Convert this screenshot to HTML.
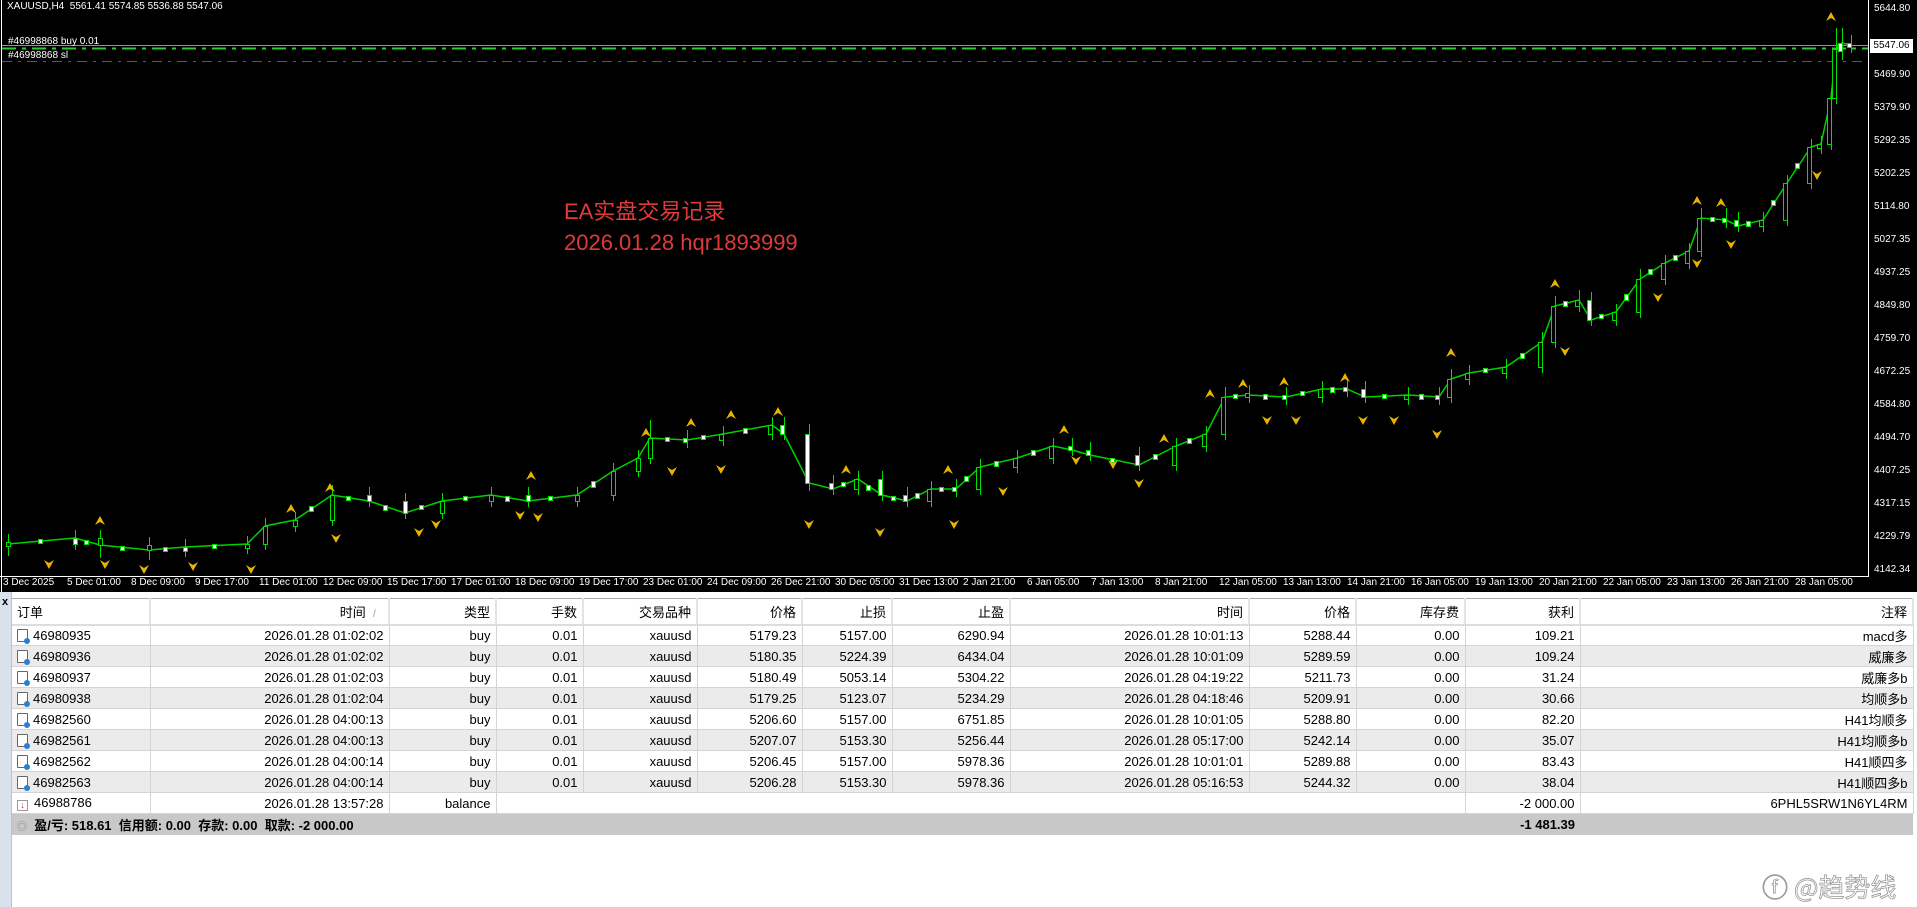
<!DOCTYPE html>
<html><head><meta charset="utf-8">
<style>
*{margin:0;padding:0;box-sizing:border-box}
body{width:1917px;height:907px;overflow:hidden;background:#fff;font-family:"Liberation Sans","Noto Sans CJK SC",sans-serif;position:relative}
#chart{position:absolute;left:0;top:0;width:1917px;height:592px;background:#000;overflow:hidden}
#chart .t{position:absolute;color:#fff;font-size:10px;white-space:nowrap;line-height:12px}
#strip{position:absolute;left:0;top:592px;width:12px;height:315px;background:#d9e2ec;border-right:1px solid #b8c4d0}
#strip span{position:absolute;top:4px;left:2px;font-size:11px;font-weight:bold}
table{position:absolute;left:12px;top:598px;border-collapse:collapse;font-size:13px;table-layout:fixed;color:#000}
td{height:21px;padding:0 5px;text-align:right;white-space:nowrap;overflow:hidden;border-right:1px solid #d4d4d4;border-bottom:1px solid #d4d4d4}
tr.h td{height:26px;background:#fff;border-right:2px solid #e4e4e4;border-top:1px solid #aaa;border-bottom:2px solid #ddd}
tr.g td{background:#ebebeb}
td.l{text-align:left}
tr.s td{background:#c8c8c8;font-weight:bold;border:none}
.ic{display:inline-block;width:11px;height:13px;border:1px solid #666;border-radius:1px;background:#fff;vertical-align:-2px;margin-right:5px;position:relative}
.ic:after{content:"";position:absolute;right:-3px;bottom:-3px;width:6px;height:6px;border-radius:50%;background:#2a7fd4}
.ib{display:inline-block;width:11px;height:11px;border:1px solid #999;background:#fff;vertical-align:-1px;margin-right:6px;color:#d22;font-size:9px;line-height:9px;text-align:center;font-weight:bold;font-style:normal}
</style></head><body>
<div id="chart">
<svg width="1917" height="592" style="position:absolute;left:0;top:0">
<line x1="1.5" y1="0" x2="1.5" y2="592" stroke="#fff"/>
<line x1="1868.5" y1="0" x2="1868.5" y2="576" stroke="#fff"/>
<line x1="0" y1="576.5" x2="1869" y2="576.5" stroke="#fff"/>
<line x1="2" x2="1868" y1="45.5" y2="45.5" stroke="#8a96a4"/>
<line x1="2" x2="1868" y1="48.5" y2="48.5" stroke="#32c832" stroke-width="2" stroke-dasharray="14,6,4,6"/>
<line x1="2" x2="1868" y1="61.5" y2="61.5" stroke="#e02020" stroke-dasharray="10,6,3,6"/>
<polyline fill="none" stroke="#00d000" stroke-width="1.5" points="8,544 75,538 100,545 149,550 185,547 247,544 265,526 295,520 332,495 369,501 405,513 442,501 491,495 528,501 577,495 613,471 638,458 650,438 687,440 723,434 772,425 784,434 809,483 833,489 858,479 882,495 907,501 931,489 956,489 980,467 1017,458 1053,446 1072,450 1090,455 1139,465 1176,446 1206,434 1225,397 1249,395 1286,397 1322,389 1347,389 1365,397 1408,395 1439,397 1451,379 1469,373 1506,367 1542,342 1555,306 1579,300 1591,320 1616,312 1640,279 1665,263 1689,251 1701,218 1726,220 1738,226 1763,220 1787,183 1811,147 1821,144 1831,98 1836,49 1842,43 1851,45"/>
<g stroke="#00e000" fill="#000">
<path fill="none" d="M8.5 534V556M75.5 530V550M100.5 530V558M149.5 537V560M185.5 539V557M247.5 536V554M265.5 518V550M295.5 512V532M332.5 485V526M369.5 487V507M405.5 493V519M442.5 493V519M491.5 487V507M528.5 487V507M577.5 487V507M613.5 463V501M638.5 450V477M650.5 420V464M687.5 430V448M723.5 426V446M772.5 417V440M784.5 417V440M809.5 424V491M833.5 475V495M858.5 471V495M882.5 471V501M907.5 487V507M931.5 481V507M956.5 479V497M980.5 459V495M1017.5 450V473M1053.5 438V464M1072.5 438V456M1090.5 442V461M1139.5 447V471M1176.5 438V471M1206.5 426V452M1225.5 387V440M1249.5 385V403M1286.5 387V405M1322.5 381V403M1347.5 379V397M1365.5 381V403M1408.5 387V405M1439.5 387V405M1451.5 369V403M1469.5 365V385M1506.5 359V379M1542.5 332V373M1555.5 296V348M1579.5 290V312M1591.5 292V326M1616.5 304V326M1640.5 269V318M1665.5 255V285M1689.5 243V269M1701.5 208V257M1726.5 208V228M1738.5 212V232M1763.5 212V232M1787.5 175V226M1811.5 139V189M1821.5 136V154M1831.5 90V150M1836.5 28V104M1842.5 28V60M1851.5 35V53"/>
<rect x="6.5" y="542.5" width="4" height="4"/><rect x="73.5" y="538.5" width="4" height="6" fill="#fff"/><rect x="98.5" y="538.5" width="4" height="7"/><rect x="147.5" y="545.5" width="4" height="5"/><rect x="183.5" y="547.5" width="4" height="4" fill="#fff"/><rect x="245.5" y="544.5" width="4" height="4"/><rect x="263.5" y="526.5" width="4" height="18"/><rect x="293.5" y="520.5" width="4" height="6"/><rect x="330.5" y="495.5" width="4" height="25"/><rect x="367.5" y="495.5" width="4" height="6" fill="#fff"/><rect x="403.5" y="501.5" width="4" height="12" fill="#fff"/><rect x="440.5" y="501.5" width="4" height="12"/><rect x="489.5" y="495.5" width="4" height="6"/><rect x="526.5" y="495.5" width="4" height="6" fill="#fff"/><rect x="575.5" y="495.5" width="4" height="6"/><rect x="611.5" y="471.5" width="4" height="24"/><rect x="636.5" y="458.5" width="4" height="13"/><rect x="648.5" y="438.5" width="4" height="20"/><rect x="683.5" y="438.5" width="4" height="4" fill="#fff"/><rect x="719.5" y="434.5" width="4" height="6"/><rect x="768.5" y="425.5" width="4" height="9"/><rect x="780.5" y="425.5" width="4" height="9" fill="#fff"/><rect x="805.5" y="434.5" width="4" height="49" fill="#fff"/><rect x="829.5" y="483.5" width="4" height="6" fill="#fff"/><rect x="854.5" y="479.5" width="4" height="10"/><rect x="878.5" y="479.5" width="4" height="16" fill="#fff"/><rect x="903.5" y="495.5" width="4" height="6" fill="#fff"/><rect x="927.5" y="489.5" width="4" height="12"/><rect x="952.5" y="487.5" width="4" height="4" fill="#fff"/><rect x="976.5" y="467.5" width="4" height="22"/><rect x="1013.5" y="458.5" width="4" height="9"/><rect x="1049.5" y="446.5" width="4" height="12"/><rect x="1068.5" y="446.5" width="4" height="4" fill="#fff"/><rect x="1086.5" y="450.5" width="4" height="5" fill="#fff"/><rect x="1135.5" y="455.5" width="4" height="10" fill="#fff"/><rect x="1172.5" y="446.5" width="4" height="19"/><rect x="1202.5" y="434.5" width="4" height="12"/><rect x="1221.5" y="397.5" width="4" height="37"/><rect x="1245.5" y="393.5" width="4" height="4"/><rect x="1282.5" y="395.5" width="4" height="4" fill="#fff"/><rect x="1318.5" y="389.5" width="4" height="8"/><rect x="1343.5" y="387.5" width="4" height="4" fill="#fff"/><rect x="1361.5" y="389.5" width="4" height="8" fill="#fff"/><rect x="1404.5" y="395.5" width="4" height="4"/><rect x="1435.5" y="395.5" width="4" height="4" fill="#fff"/><rect x="1447.5" y="379.5" width="4" height="18"/><rect x="1465.5" y="373.5" width="4" height="6"/><rect x="1502.5" y="367.5" width="4" height="6"/><rect x="1538.5" y="342.5" width="4" height="25"/><rect x="1551.5" y="306.5" width="4" height="36"/><rect x="1575.5" y="300.5" width="4" height="6"/><rect x="1587.5" y="300.5" width="4" height="20" fill="#fff"/><rect x="1612.5" y="312.5" width="4" height="8"/><rect x="1636.5" y="279.5" width="4" height="33"/><rect x="1661.5" y="263.5" width="4" height="16"/><rect x="1685.5" y="251.5" width="4" height="12"/><rect x="1697.5" y="218.5" width="4" height="33"/><rect x="1722.5" y="218.5" width="4" height="4" fill="#fff"/><rect x="1734.5" y="220.5" width="4" height="6" fill="#fff"/><rect x="1759.5" y="220.5" width="4" height="6"/><rect x="1783.5" y="183.5" width="4" height="37"/><rect x="1807.5" y="147.5" width="4" height="36"/><rect x="1817.5" y="144.5" width="4" height="4"/><rect x="1827.5" y="98.5" width="4" height="46"/><rect x="1832.5" y="49.5" width="4" height="49"/><rect x="1838.5" y="43.5" width="4" height="8" fill="#fff"/><rect x="1847.5" y="43.5" width="4" height="4" fill="#fff"/>
<g fill="#fff">
<rect x="38.5" y="539.5" width="4" height="4"/><rect x="84.5" y="540.5" width="4" height="4"/><rect x="120.5" y="546.5" width="4" height="4"/><rect x="163.5" y="547.5" width="4" height="4"/><rect x="212.5" y="544.5" width="4" height="4"/><rect x="309.5" y="506.5" width="4" height="5"/><rect x="346.5" y="496.5" width="4" height="4"/><rect x="383.5" y="505.5" width="4" height="5"/><rect x="419.5" y="505.5" width="4" height="4"/><rect x="463.5" y="496.5" width="4" height="4"/><rect x="505.5" y="496.5" width="4" height="5"/><rect x="548.5" y="496.5" width="4" height="4"/><rect x="591.5" y="481.5" width="4" height="6"/><rect x="665.5" y="437.5" width="4" height="4"/><rect x="701.5" y="435.5" width="4" height="4"/><rect x="743.5" y="428.5" width="4" height="5"/><rect x="841.5" y="482.5" width="4" height="4"/><rect x="866.5" y="485.5" width="4" height="5"/><rect x="891.5" y="496.5" width="4" height="4"/><rect x="915.5" y="493.5" width="4" height="5"/><rect x="939.5" y="487.5" width="4" height="4"/><rect x="964.5" y="476.5" width="4" height="5"/><rect x="994.5" y="461.5" width="4" height="5"/><rect x="1031.5" y="450.5" width="4" height="5"/><rect x="1110.5" y="458.5" width="4" height="4"/><rect x="1153.5" y="454.5" width="4" height="5"/><rect x="1187.5" y="438.5" width="4" height="5"/><rect x="1233.5" y="394.5" width="4" height="4"/><rect x="1263.5" y="394.5" width="4" height="5"/><rect x="1300.5" y="391.5" width="4" height="4"/><rect x="1330.5" y="387.5" width="4" height="5"/><rect x="1382.5" y="394.5" width="4" height="4"/><rect x="1419.5" y="394.5" width="4" height="5"/><rect x="1483.5" y="368.5" width="4" height="4"/><rect x="1520.5" y="353.5" width="4" height="5"/><rect x="1563.5" y="301.5" width="4" height="5"/><rect x="1599.5" y="314.5" width="4" height="4"/><rect x="1624.5" y="294.5" width="4" height="6"/><rect x="1648.5" y="269.5" width="4" height="5"/><rect x="1673.5" y="255.5" width="4" height="5"/><rect x="1710.5" y="217.5" width="4" height="4"/><rect x="1746.5" y="221.5" width="4" height="5"/><rect x="1771.5" y="200.5" width="4" height="5"/><rect x="1795.5" y="163.5" width="4" height="5"/>
</g></g>
<g fill="#e8b400">
<polygon points="95,525 100,516 105,525 100,522"/><polygon points="286,513 291,504 296,513 291,510"/><polygon points="325,492 330,483 335,492 330,489"/><polygon points="526,480 531,471 536,480 531,477"/><polygon points="641,437 646,428 651,437 646,434"/><polygon points="686,427 691,418 696,427 691,424"/><polygon points="726,419 731,410 736,419 731,416"/><polygon points="773,416 778,407 783,416 778,413"/><polygon points="841,474 846,465 851,474 846,471"/><polygon points="943,474 948,465 953,474 948,471"/><polygon points="1059,434 1064,425 1069,434 1064,431"/><polygon points="1159,443 1164,434 1169,443 1164,440"/><polygon points="1205,398 1210,389 1215,398 1210,395"/><polygon points="1238,388 1243,379 1248,388 1243,385"/><polygon points="1279,386 1284,377 1289,386 1284,383"/><polygon points="1340,382 1345,373 1350,382 1345,379"/><polygon points="1446,357 1451,348 1456,357 1451,354"/><polygon points="1550,288 1555,279 1560,288 1555,285"/><polygon points="1692,205 1697,196 1702,205 1697,202"/><polygon points="1716,207 1721,198 1726,207 1721,204"/><polygon points="1826,21 1831,12 1836,21 1831,18"/>
<polygon points="44,560 49,569 54,560 49,563"/><polygon points="100,560 105,569 110,560 105,563"/><polygon points="139,565 144,574 149,565 144,568"/><polygon points="188,562 193,571 198,562 193,565"/><polygon points="246,565 251,574 256,565 251,568"/><polygon points="331,534 336,543 341,534 336,537"/><polygon points="414,528 419,537 424,528 419,531"/><polygon points="431,520 436,529 441,520 436,523"/><polygon points="515,511 520,520 525,511 520,514"/><polygon points="533,513 538,522 543,513 538,516"/><polygon points="667,467 672,476 677,467 672,470"/><polygon points="716,465 721,474 726,465 721,468"/><polygon points="804,520 809,529 814,520 809,523"/><polygon points="875,528 880,537 885,528 880,531"/><polygon points="949,520 954,529 959,520 954,523"/><polygon points="998,487 1003,496 1008,487 1003,490"/><polygon points="1071,456 1076,465 1081,456 1076,459"/><polygon points="1108,460 1113,469 1118,460 1113,463"/><polygon points="1134,479 1139,488 1144,479 1139,482"/><polygon points="1262,416 1267,425 1272,416 1267,419"/><polygon points="1291,416 1296,425 1301,416 1296,419"/><polygon points="1358,416 1363,425 1368,416 1363,419"/><polygon points="1389,416 1394,425 1399,416 1394,419"/><polygon points="1432,430 1437,439 1442,430 1437,433"/><polygon points="1560,347 1565,356 1570,347 1565,350"/><polygon points="1653,293 1658,302 1663,293 1658,296"/><polygon points="1692,259 1697,268 1702,259 1697,262"/><polygon points="1726,240 1731,249 1736,240 1731,243"/><polygon points="1812,171 1817,180 1822,171 1817,174"/>
</g>
</svg>
<div class="t" style="left:7px;top:1px">XAUUSD,H4&nbsp; 5561.41 5574.85 5536.88 5547.06</div>
<div class="t" style="left:8px;top:36px">#46998868 buy 0.01</div>
<div class="t" style="left:8px;top:50px">#46998868 sl</div>
<div style="position:absolute;left:564px;top:196px;color:#e03a3a;font-size:22px;line-height:31px">EA实盘交易记录<br>2026.01.28 hqr1893999</div>
<div class="t" style="left:1874px;top:3px">5644.80</div>
<div class="t" style="left:1874px;top:69px">5469.90</div>
<div class="t" style="left:1874px;top:102px">5379.90</div>
<div class="t" style="left:1874px;top:135px">5292.35</div>
<div class="t" style="left:1874px;top:168px">5202.25</div>
<div class="t" style="left:1874px;top:201px">5114.80</div>
<div class="t" style="left:1874px;top:234px">5027.35</div>
<div class="t" style="left:1874px;top:267px">4937.25</div>
<div class="t" style="left:1874px;top:300px">4849.80</div>
<div class="t" style="left:1874px;top:333px">4759.70</div>
<div class="t" style="left:1874px;top:366px">4672.25</div>
<div class="t" style="left:1874px;top:399px">4584.80</div>
<div class="t" style="left:1874px;top:432px">4494.70</div>
<div class="t" style="left:1874px;top:465px">4407.25</div>
<div class="t" style="left:1874px;top:498px">4317.15</div>
<div class="t" style="left:1874px;top:531px">4229.79</div>
<div class="t" style="left:1874px;top:564px">4142.34</div>
<div style="position:absolute;left:1870px;top:39px;width:43px;height:14px;background:#fff;color:#000;font-size:10px;line-height:14px;text-align:center">5547.06</div>
<div class="t" style="left:3px;top:577px">3 Dec 2025</div>
<div class="t" style="left:67px;top:577px">5 Dec 01:00</div>
<div class="t" style="left:131px;top:577px">8 Dec 09:00</div>
<div class="t" style="left:195px;top:577px">9 Dec 17:00</div>
<div class="t" style="left:259px;top:577px">11 Dec 01:00</div>
<div class="t" style="left:323px;top:577px">12 Dec 09:00</div>
<div class="t" style="left:387px;top:577px">15 Dec 17:00</div>
<div class="t" style="left:451px;top:577px">17 Dec 01:00</div>
<div class="t" style="left:515px;top:577px">18 Dec 09:00</div>
<div class="t" style="left:579px;top:577px">19 Dec 17:00</div>
<div class="t" style="left:643px;top:577px">23 Dec 01:00</div>
<div class="t" style="left:707px;top:577px">24 Dec 09:00</div>
<div class="t" style="left:771px;top:577px">26 Dec 21:00</div>
<div class="t" style="left:835px;top:577px">30 Dec 05:00</div>
<div class="t" style="left:899px;top:577px">31 Dec 13:00</div>
<div class="t" style="left:963px;top:577px">2 Jan 21:00</div>
<div class="t" style="left:1027px;top:577px">6 Jan 05:00</div>
<div class="t" style="left:1091px;top:577px">7 Jan 13:00</div>
<div class="t" style="left:1155px;top:577px">8 Jan 21:00</div>
<div class="t" style="left:1219px;top:577px">12 Jan 05:00</div>
<div class="t" style="left:1283px;top:577px">13 Jan 13:00</div>
<div class="t" style="left:1347px;top:577px">14 Jan 21:00</div>
<div class="t" style="left:1411px;top:577px">16 Jan 05:00</div>
<div class="t" style="left:1475px;top:577px">19 Jan 13:00</div>
<div class="t" style="left:1539px;top:577px">20 Jan 21:00</div>
<div class="t" style="left:1603px;top:577px">22 Jan 05:00</div>
<div class="t" style="left:1667px;top:577px">23 Jan 13:00</div>
<div class="t" style="left:1731px;top:577px">26 Jan 21:00</div>
<div class="t" style="left:1795px;top:577px">28 Jan 05:00</div>
</div>
<div id="strip"><span>x</span></div>
<table>
<colgroup><col style="width:138px"><col style="width:239px"><col style="width:107px"><col style="width:87px"><col style="width:114px"><col style="width:105px"><col style="width:90px"><col style="width:118px"><col style="width:239px"><col style="width:107px"><col style="width:109px"><col style="width:115px"><col style="width:333px"></colgroup>
<tr class="h"><td class="l">订单</td><td>时间 &nbsp;<span style="color:#999;font-size:10px">/</span>&nbsp;&nbsp;</td><td>类型</td><td>手数</td><td>交易品种</td><td>价格</td><td>止损</td><td>止盈</td><td>时间</td><td>价格</td><td>库存费</td><td>获利</td><td>注释</td></tr>
<tr><td class="l"><i class="ic"></i>46980935</td><td>2026.01.28 01:02:02</td><td>buy</td><td>0.01</td><td>xauusd</td><td>5179.23</td><td>5157.00</td><td>6290.94</td><td>2026.01.28 10:01:13</td><td>5288.44</td><td>0.00</td><td>109.21</td><td>macd多</td></tr>
<tr class="g"><td class="l"><i class="ic"></i>46980936</td><td>2026.01.28 01:02:02</td><td>buy</td><td>0.01</td><td>xauusd</td><td>5180.35</td><td>5224.39</td><td>6434.04</td><td>2026.01.28 10:01:09</td><td>5289.59</td><td>0.00</td><td>109.24</td><td>威廉多</td></tr>
<tr><td class="l"><i class="ic"></i>46980937</td><td>2026.01.28 01:02:03</td><td>buy</td><td>0.01</td><td>xauusd</td><td>5180.49</td><td>5053.14</td><td>5304.22</td><td>2026.01.28 04:19:22</td><td>5211.73</td><td>0.00</td><td>31.24</td><td>威廉多b</td></tr>
<tr class="g"><td class="l"><i class="ic"></i>46980938</td><td>2026.01.28 01:02:04</td><td>buy</td><td>0.01</td><td>xauusd</td><td>5179.25</td><td>5123.07</td><td>5234.29</td><td>2026.01.28 04:18:46</td><td>5209.91</td><td>0.00</td><td>30.66</td><td>均顺多b</td></tr>
<tr><td class="l"><i class="ic"></i>46982560</td><td>2026.01.28 04:00:13</td><td>buy</td><td>0.01</td><td>xauusd</td><td>5206.60</td><td>5157.00</td><td>6751.85</td><td>2026.01.28 10:01:05</td><td>5288.80</td><td>0.00</td><td>82.20</td><td>H41均顺多</td></tr>
<tr class="g"><td class="l"><i class="ic"></i>46982561</td><td>2026.01.28 04:00:13</td><td>buy</td><td>0.01</td><td>xauusd</td><td>5207.07</td><td>5153.30</td><td>5256.44</td><td>2026.01.28 05:17:00</td><td>5242.14</td><td>0.00</td><td>35.07</td><td>H41均顺多b</td></tr>
<tr><td class="l"><i class="ic"></i>46982562</td><td>2026.01.28 04:00:14</td><td>buy</td><td>0.01</td><td>xauusd</td><td>5206.45</td><td>5157.00</td><td>5978.36</td><td>2026.01.28 10:01:01</td><td>5289.88</td><td>0.00</td><td>83.43</td><td>H41顺四多</td></tr>
<tr class="g"><td class="l"><i class="ic"></i>46982563</td><td>2026.01.28 04:00:14</td><td>buy</td><td>0.01</td><td>xauusd</td><td>5206.28</td><td>5153.30</td><td>5978.36</td><td>2026.01.28 05:16:53</td><td>5244.32</td><td>0.00</td><td>38.04</td><td>H41顺四多b</td></tr>
<tr><td class="l"><i class="ib">↓</i>46988786</td><td>2026.01.28 13:57:28</td><td>balance</td><td colspan="8" style="border-right:1px solid #d4d4d4"></td><td>-2 000.00</td><td>6PHL5SRW1N6YL4RM</td></tr>
<tr class="s"><td class="l" colspan="8" style="overflow:visible"><span style="color:#888;font-weight:normal;font-size:10px">◎</span>&nbsp; 盈/亏: 518.61&nbsp; 信用额: 0.00&nbsp; 存款: 0.00&nbsp; 取款: -2 000.00</td><td></td><td></td><td></td><td>-1 481.39</td><td></td></tr>
</table>
<div style="position:absolute;left:1762px;top:868px;font-size:26px;color:#fff;-webkit-text-stroke:0.8px #999;font-family:'Noto Sans CJK SC',sans-serif">ⓕ @趋势线</div>
</body></html>
